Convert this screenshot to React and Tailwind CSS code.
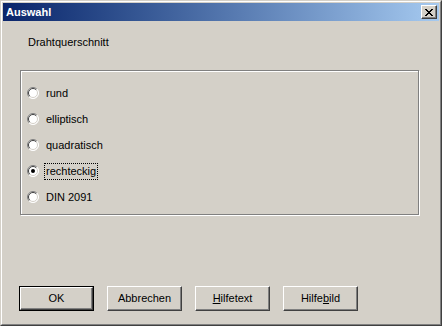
import { useState } from 'react';

const options = ['rund', 'elliptisch', 'quadratisch', 'rechteckig', 'DIN 2091'];

const Radio = ({ checked }) => (
  <svg width="12" height="12" viewBox="0 0 12 12" className="shrink-0">
    <circle cx="6" cy="6" r="5.5" fill="#fff" />
    {/* outer ring: gray top-left, white bottom-right */}
    <path d="M2.1 9.9 A5.5 5.5 0 0 1 9.9 2.1" fill="none" stroke="#808080" strokeWidth="1" />
    <path d="M9.9 2.1 A5.5 5.5 0 0 1 2.1 9.9" fill="none" stroke="#ffffff" strokeWidth="1" />
    {/* inner ring: dark top-left, face bottom-right */}
    <path d="M2.8 9.2 A4.5 4.5 0 0 1 9.2 2.8" fill="none" stroke="#404040" strokeWidth="1" />
    <path d="M9.2 2.8 A4.5 4.5 0 0 1 2.8 9.2" fill="none" stroke="#d4d0c8" strokeWidth="1" />
    {checked && <circle cx="6" cy="6" r="2" fill="#000" />}
  </svg>
);

const Button = ({ children, isDefault }) => (
  <div
    className={
      'w-[75px] h-[25px] ' +
      (isDefault ? 'border border-black' : '')
    }
  >
    <div
      className={
        'h-full w-full border border-t-white border-l-white border-r-[#404040] border-b-[#404040] ' +
        'flex items-center justify-center shadow-[inset_-1px_-1px_0_#808080]'
      }
    >
      {children}
    </div>
  </div>
);

export default function App() {
  const [selected, setSelected] = useState(3);

  return (
    <div
      className="w-[442px] h-[326px] bg-[#d4d0c8] text-black text-[11px] leading-[13px]"
      style={{ fontFamily: '"Liberation Sans", Arial, sans-serif' }}
    >
      <div className="h-full border border-t-[#d4d0c8] border-l-[#d4d0c8] border-r-[#404040] border-b-[#404040]">
        <div className="h-full border border-t-white border-l-white border-r-[#808080] border-b-[#808080] p-px flex flex-col">
          {/* Title bar */}
          <div className="h-[18px] flex items-center justify-between bg-gradient-to-r from-[#0a246a] to-[#a6caf0] pl-[3px] pr-[2px]">
            <span className="text-white font-bold text-[11px]">Auswahl</span>
            <div className="w-[16px] h-[14px] bg-[#d4d0c8] border border-t-white border-l-white border-r-[#404040] border-b-[#404040] shadow-[inset_-1px_-1px_0_#808080] flex items-center justify-center">
              <svg width="8" height="7" viewBox="0 0 8 7">
                <path d="M0 0h2v1h1v1h2V1h1V0h2v1H7v1H6v1H5v1h1v1h1v1h1v1H6V6H5V5H3v1H2v1H0V6h1V5h1V4h1V3H2V2H1V1H0z" fill="#000" />
              </svg>
            </div>
          </div>

          {/* Heading */}
          <div className="mt-[15px] ml-[25px]">Drahtquerschnitt</div>

          {/* Group box */}
          <div className="mt-[21px] ml-[17px] w-[399px] h-[145px] border border-[#808080] shadow-[1px_1px_0_#fff,inset_1px_1px_0_#fff] pt-[9px] pl-[6px]">
            {options.map((opt, i) => (
              <div
                key={opt}
                className="h-[26px] flex items-center cursor-default"
                onClick={() => setSelected(i)}
              >
                <Radio checked={selected === i} />
                <span
                  className={
                    'ml-[5px] px-px py-px ' +
                    (selected === i ? 'border border-dotted border-black' : 'border border-transparent')
                  }
                >
                  {opt}
                </span>
              </div>
            ))}
          </div>

          {/* Buttons */}
          <div className="mt-[71px] ml-[16px] flex gap-[13px]">
            <Button isDefault>OK</Button>
            <Button>Abbrechen</Button>
            <Button>
              <span><span className="underline">H</span>ilfetext</span>
            </Button>
            <Button>
              <span>Hilfe<span className="underline">b</span>ild</span>
            </Button>
          </div>
        </div>
      </div>
    </div>
  );
}
